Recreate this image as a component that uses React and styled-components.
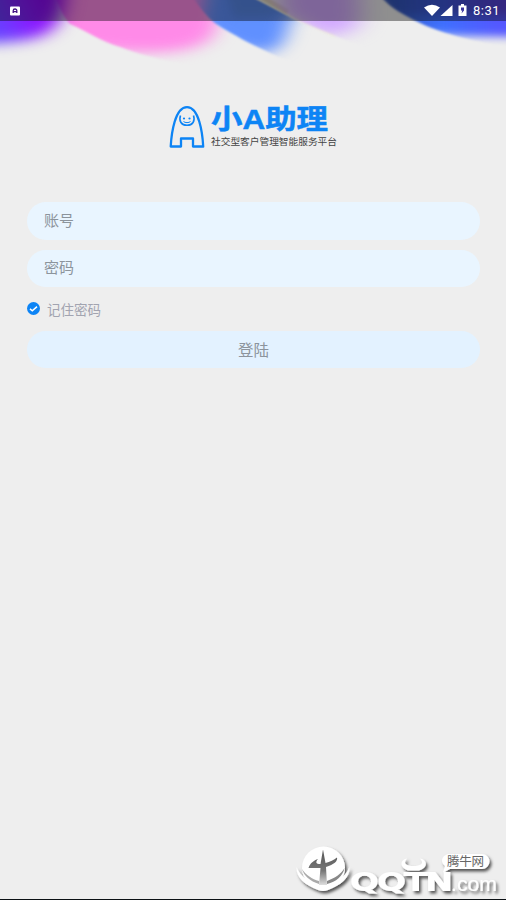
import React, { useState } from "react";
import styled, { createGlobalStyle } from "styled-components";

//colors
const ST_BG = "#eeeeee";
const ST_BLUE = "#0d84f5";
const ST_FIELD = "#e9f5ff";
const ST_BUTTON = "#e3f2ff";
const ST_TEXT = "#8c949c";

const GlobalStyle = createGlobalStyle`
  * {
    box-sizing: border-box;
  }
  body {
    margin: 0;
    background: ${ST_BG};
    font-family: "Liberation Sans", "Noto Sans CJK SC", sans-serif;
  }
`;

const Screen = styled.div`
  position: relative;
  display: flex;
  flex-direction: column;
  width: 100%;
  height: 900px;
  overflow: hidden;
  background: ${ST_BG};
  border-bottom: 1px solid #0b1014;
`;

const Backdrop = styled.svg`
  position: absolute;
  top: 0;
  left: 0;

  filter {
    color-interpolation-filters: sRGB;
  }
`;

const StatusBar = styled.header`
  position: relative;
  display: flex;
  align-items: center;
  justify-content: space-between;
  height: 21px;
  padding: 0 7px 0 10px;
  background: rgba(0, 0, 0, 0.4);
`;

const StatusIcons = styled.div`
  display: flex;
  align-items: center;
`;

const Clock = styled.span`
  margin-left: 5px;
  width: 26px;
  color: #fff;
  font: 400 13px/21px Roboto, sans-serif;
  letter-spacing: 0.5px;
  white-space: nowrap;
`;

const Brand = styled.div`
  position: relative;
  display: flex;
  justify-content: center;
  height: 43px;
  margin-top: 83px;
`;

const LogoMark = styled.svg`
  display: block;
  overflow: visible;
`;

const Login = styled.form`
  position: relative;
  display: flex;
  flex-direction: column;
  margin: 55px 26px 0 27px;
`;

const Field = styled.input`
  width: 100%;
  height: ${(props) => props.$height};
  margin-bottom: ${(props) => props.$bottom};
  padding: 0 17px 4px;
  border: 0;
  border-radius: 19px;
  outline: none;
  background: ${ST_FIELD};
  color: ${ST_TEXT};
  font: 15px "Noto Sans CJK SC", sans-serif;

  &::placeholder {
    color: ${ST_TEXT};
    opacity: 1;
  }
`;

const Remember = styled.label`
  display: flex;
  align-items: flex-start;
  height: 44px;
  padding-top: 15px;
  color: #a2a4b0;
  font: 13.5px/15px "Noto Sans CJK SC", sans-serif;
`;

const RememberText = styled.span`
  margin-left: 7px;
`;

const HiddenCheck = styled.input`
  position: absolute;
  opacity: 0;
  pointer-events: none;
`;

const Submit = styled.button`
  height: 37px;
  padding: 0 0 1px;
  border: 0;
  border-radius: 19px;
  background: ${ST_BUTTON};
  color: ${ST_TEXT};
  font: 15.5px "Noto Sans CJK SC", sans-serif;
`;

const Watermark = styled.svg`
  position: absolute;
  right: 0;
  bottom: -1px;
`;

// every wave is a blurred blob, cut sharp along its lower left side
function Waves() {
  return (
    <Backdrop width="506" height="75" viewBox="0 0 506 75">
      <defs>
        <filter id="soft" filterUnits="userSpaceOnUse" x="-80" y="-80" width="680" height="220">
          <feGaussianBlur stdDeviation="10 6.5" />
        </filter>
        <filter id="softer" filterUnits="userSpaceOnUse" x="-80" y="-80" width="680" height="220">
          <feGaussianBlur stdDeviation="13 7" />
        </filter>
        <filter id="soft4" filterUnits="userSpaceOnUse" x="-80" y="-80" width="680" height="220">
          <feGaussianBlur stdDeviation="4.500" />
        </filter>
        <filter id="edge" filterUnits="userSpaceOnUse" x="-80" y="-80" width="680" height="220">
          <feGaussianBlur stdDeviation="1" />
        </filter>
        <linearGradient id="purple" gradientUnits="userSpaceOnUse" x1="0" y1="36" x2="60" y2="8">
          <stop offset="0" stopColor="#6643ff" />
          <stop offset=".55" stopColor="#8a1aff" />
          <stop offset="1" stopColor="#8c00ee" />
        </linearGradient>
        <linearGradient id="right" gradientUnits="userSpaceOnUse" x1="385" y1="0" x2="500" y2="0">
          <stop offset="0" stopColor="#3a60c0" />
          <stop offset=".5" stopColor="#3f70ff" />
          <stop offset="1" stopColor="#5558ff" />
        </linearGradient>
        <linearGradient id="rightTop" x1="0" y1="0" x2="1" y2="0">
          <stop offset="0" stopColor="#20409c" stopOpacity=".3" />
          <stop offset="1" stopColor="#6038c8" stopOpacity=".75" />
        </linearGradient>
        <mask id="pinkCut" maskUnits="userSpaceOnUse" x="0" y="-20" width="506" height="95">
          <path d="M54-20V-6C60 8 63 17 70 24C88 32 103 42 120 47C145 57 175 63 240 75H270V54C254 46 232 34 216 24L290-6V-20Z" fill="#fff" filter="url(#edge)" />
        </mask>
        <mask id="blueCut" maskUnits="userSpaceOnUse" x="0" y="-20" width="506" height="95">
          <path d="M190-20V-6C202 10 207 17 216 24C232 34 254 46 272 54C285 60 300 65 330 70V34L294 19L253-3V-20Z" fill="#fff" filter="url(#edge)" />
        </mask>
        <mask id="lilacCut" maskUnits="userSpaceOnUse" x="0" y="-20" width="506" height="95">
          <path d="M254-20V-6L297 20L340 38L400 60V-20Z" fill="#fff" filter="url(#edge)" />
        </mask>
        <mask id="rightCut" maskUnits="userSpaceOnUse" x="0" y="-20" width="520" height="95">
          <path d="M379-20V-5C390 8 402 14 418 22C440 33 470 41 512 48V-20Z" fill="#fff" filter="url(#edge)" />
        </mask>
      </defs>
      <g mask="url(#pinkCut)">
        <path d="M0-40H218V22L212 38C190 54 160 53 120 52L0 40Z" fill="#ff8ae8" filter="url(#soft)" />
      </g>
      <g mask="url(#blueCut)">
        <path d="M212-50H330V-10L289 20C289 32 284 42 276 50C255 56 225 48 198 28Z" fill="#6090ff" filter="url(#soft)" />
        <path d="M220-30H290V8L268 17H234Z" fill="#5686e0" opacity=".7" filter="url(#soft4)" />
      </g>
      <path d="M256-3L300 20L335 36" fill="none" stroke="#efeee0" strokeWidth="3" filter="url(#edge)" />
      <path d="M262-3L288 12" fill="none" stroke="#d6cba4" strokeWidth="5" opacity=".7" filter="url(#edge)" />
      <g mask="url(#lilacCut)">
        <path d="M284-40H356L360 18C356 34 343 36 318 34L280 12Z" fill="#d2a8ff" filter="url(#softer)" />
      </g>
      <path
        d="M-60-60H66C67-10 66 15 54 27C44 41 12 44-60 44Z"
        fill="url(#purple)"
        filter="url(#soft)"
      />
      <g mask="url(#rightCut)">
        <path d="M350-40H540V37C490 37 440 36 405 32Z" fill="url(#right)" filter="url(#soft4)" />
        <rect x="380" y="-10" width="140" height="24" fill="url(#rightTop)" filter="url(#soft4)" />
      </g>
    </Backdrop>
  );
}

function Logo() {
  return (
    <LogoMark width="170" height="46" viewBox="168 104 170 46">
      <g fill="none" stroke={ST_BLUE} strokeWidth="2.300" strokeLinejoin="round">
        <path d="M170.700 146.500C171.500 133 175 107.200 187 107.200C199 107.200 202.500 133 203.200 146.500H193V138.500H181V146.500Z" />
        <path d="M180.500 115.500C178.500 121 181.500 125.300 187 125.300C192.500 125.300 195.500 121 193.500 115.500" strokeWidth="1.600" />
        <path d="M183.500 121.500C185 123 189 123 190.500 121.500" strokeWidth="1" />
      </g>
      <circle cx="184" cy="118.500" r="1.100" fill={ST_BLUE} />
      <circle cx="189.500" cy="118.500" r="1.100" fill={ST_BLUE} />
      <text
        x="211"
        y="129.300"
        fill={ST_BLUE}
        stroke={ST_BLUE}
        strokeWidth=".5"
        fontSize="27.500"
        fontWeight="700"
        fontFamily="'Liberation Sans', 'Noto Sans CJK SC', sans-serif"
        textLength="117"
        lengthAdjust="spacingAndGlyphs"
      >
        小A助理
      </text>
      <text
        x="211"
        y="145.300"
        fill="#444"
        fontSize="9.500"
        fontFamily="'Noto Sans CJK SC', sans-serif"
        textLength="126"
        lengthAdjust="spacingAndGlyphs"
      >
        社交型客户管理智能服务平台
      </text>
    </LogoMark>
  );
}

function SiteMark() {
  return (
    <Watermark width="220" height="64" viewBox="286 836 220 64">
      <defs>
        <filter id="shadow" x="-10%" y="-10%" width="125%" height="135%">
          <feDropShadow dx="2" dy="2.500" stdDeviation="1.800" floodColor="#000" floodOpacity=".65" />
        </filter>
        <linearGradient id="spike" x1="0" y1="0" x2="0" y2="1">
          <stop offset="0" stopColor="#555" />
          <stop offset=".6" stopColor="#777" />
          <stop offset="1" stopColor="#ddd" />
        </linearGradient>
        <filter id="tiny">
          <feGaussianBlur stdDeviation=".6" />
        </filter>
      </defs>
      <g filter="url(#shadow)" fill="#fff">
        <circle cx="323.500" cy="868" r="21.500" />
        <path d="M296.500 867C300 877 311 883 323 887C335 883 346 877 349.500 867C350 878 341 885 328 890Q323 892 318 890C305 885 296 878 296.500 867Z" />
        <text
          x="351"
          y="889.500"
          fontFamily="'DejaVu Sans', sans-serif"
          fontSize="22.500"
          stroke="#fff"
          strokeWidth="2"
          textLength="101"
          lengthAdjust="spacingAndGlyphs"
        >
          QQTN
        </text>
        <path d="M407 858.500C399 860 400 868 408 870.500H419C428 868 428 860 420 858.500C425 864 420 866 413.500 866C407 866 402 864 407 858.500Z" />
        <text
          x="451"
          y="890.500"
          fontFamily="'Liberation Sans', sans-serif"
          fontSize="20"
          textLength="46"
          lengthAdjust="spacingAndGlyphs"
        >
          .com
        </text>
        <path d="M450 854H482A7.500 7.500 0 0 1 482 869H450L443 872.500L445 866C439 861 443 854 450 854Z" />
      </g>
      <g filter="url(#tiny)">
        <path
          d="M323 849.500L325.500 863C330 862 334 860 337 857.500C338 861 334 864.500 326 867L327 885H319L320.500 868C316 868 311 868 308.500 868C310 863 314 860.500 318 859C315.500 862 315.500 864 320.500 864Z"
          fill="url(#spike)"
        />
        <path d="M302 869C306 875 312 879 319 881V884C310 881 304 876 302 869Z" fill="#aaa" />
        <path d="M327 881C335 878 341 874 344.500 868C343 876 336 882 327 884Z" fill="#888" />
      </g>
      <text
        x="447"
        y="866.300"
        fill="#666"
        fontSize="12.500"
        fontFamily="'Noto Sans CJK SC', sans-serif"
        textLength="37"
      >
        腾牛网
      </text>
    </Watermark>
  );
}

function CheckMark({ checked }) {
  return (
    <svg width="13" height="13" viewBox="0 0 13 13">
      <circle cx="6.5" cy="6.5" r="6.5" fill={checked ? ST_BLUE : "#c5c9cf"} />
      <path d="M3 6.900L5.300 8.800L10 4.600" fill="none" stroke="#fff" strokeWidth="1.500" />
    </svg>
  );
}

function App() {
  const [remember, setRemember] = useState(true);

  return (
    <Screen>
      <GlobalStyle />
      <Waves />
      <StatusBar>
        <svg width="10" height="10" viewBox="0 0 10 10">
          <rect y=".5" width="10" height="9" rx="1" fill="#fff" />
          <path d="M3.200 7V4.800A1.800 1.800 0 0 1 6.800 4.800V7M3.500 5.700H6.500" fill="none" stroke="#431383" strokeWidth="1.300" />
        </svg>
        <StatusIcons>
          <svg width="44" height="13" viewBox="0 0 44 13">
            <path d="M0 3.500Q8 -2 16 3.500L8 12Z" fill="#fff" />
            <path d="M16.500 12L28.500 1V12Z" fill="#fff" />
            <path d="M37 0H40V1.500H42.500V12H34.500V1.500H37Z" fill="#fff" />
            <path d="M37 3.500H40V6.500L37.500 9.500L38.300 6.500H37Z" fill="#39329d" />
          </svg>
          <Clock>8:31</Clock>
        </StatusIcons>
      </StatusBar>

      <Brand>
        <Logo />
      </Brand>

      <Login onSubmit={(e) => e.preventDefault()}>
        <Field $height="38px" $bottom="10px" placeholder="账号" />
        <Field $height="37px" $bottom="0px" type="password" placeholder="密码" />
        <Remember>
          <HiddenCheck type="checkbox" checked={remember} onChange={() => setRemember(!remember)} />
          <CheckMark checked={remember} />
          <RememberText>记住密码</RememberText>
        </Remember>
        <Submit type="submit">登陆</Submit>
      </Login>

      <SiteMark />
    </Screen>
  );
}

export default App;
